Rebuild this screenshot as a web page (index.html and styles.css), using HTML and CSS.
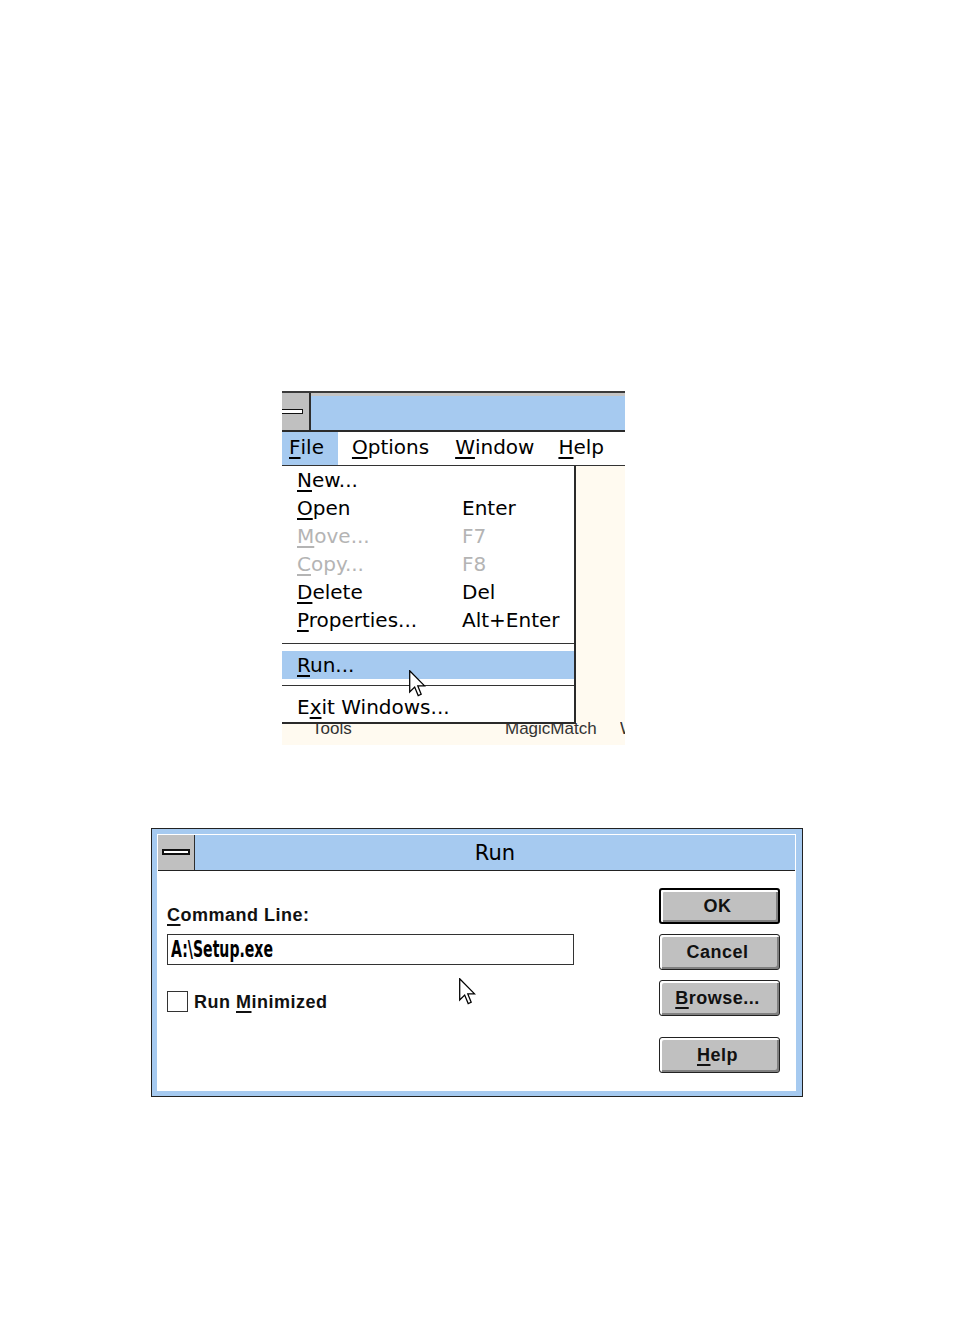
FILE: index.html
```html
<!DOCTYPE html>
<html>
<head>
<meta charset="utf-8">
<link rel="stylesheet" href="styles.css">
</head>
<body>
<div class="pm">
  <div class="pm-title">
    <div class="sysbox"><span class="minus"></span></div>
    <div class="pm-caption"></div>
  </div>
  <div class="menubar">
    <span class="mitem active"><u>F</u>ile</span>
    <span class="mitem"><u>O</u>ptions</span>
    <span class="mitem"><u>W</u>indow</span>
    <span class="mitem"><u>H</u>elp</span>
  </div>
  <div class="pm-content">
    <div class="group-row">
      <span class="gi gi-1">Tools</span>
      <span class="gi gi-2">MagicMatch</span>
      <span class="gi gi-3">W</span>
    </div>
    <div class="dropdown">
      <div class="row"><span><u>N</u>ew...</span><span></span></div>
      <div class="row"><span><u>O</u>pen</span><span>Enter</span></div>
      <div class="row disabled"><span><u>M</u>ove...</span><span>F7</span></div>
      <div class="row disabled"><span><u>C</u>opy...</span><span>F8</span></div>
      <div class="row"><span><u>D</u>elete</span><span>Del</span></div>
      <div class="row"><span><u>P</u>roperties...</span><span>Alt+Enter</span></div>
      <div class="sep sep-1"></div>
      <div class="row selected"><span><u>R</u>un...</span><span></span></div>
      <div class="sep sep-2"></div>
      <div class="row last"><span>E<u>x</u>it Windows...</span><span></span></div>
    </div>
    <svg class="cursor cursor-menu" width="17" height="27" viewBox="0 0 12 19"><path d="M0.5 0.5 L0.5 15.5 L4 12 L6.5 18 L8.6 17.1 L6.2 11.2 L11 11.2 Z" fill="#fff" stroke="#000" stroke-width="0.9" stroke-linejoin="miter"/></svg>
  </div>
</div>

<div class="dlg">
  <div class="dlg-inner">
    <div class="dlg-title">
      <div class="sysbox dsys"><span class="minus dminus"></span></div>
      <div class="dlg-caption">Run</div>
    </div>
    <div class="dlg-client">
      <div class="left-col">
        <div class="label"><u>C</u>ommand Line:</div>
        <div class="input"><span class="input-text">A:\Setup.exe</span></div>
        <div class="check-row">
          <span class="checkbox"></span>
          <span class="label">Run <u>M</u>inimized</span>
        </div>
      </div>
      <div class="right-col">
        <div class="btn default">OK</div>
        <div class="btn">Cancel</div>
        <div class="btn"><u>B</u>rowse...</div>
        <div class="btn help"><u>H</u>elp</div>
      </div>
      <svg class="cursor cursor-dlg" width="17" height="27" viewBox="0 0 12 19"><path d="M0.5 0.5 L0.5 15.5 L4 12 L6.5 18 L8.6 17.1 L6.2 11.2 L11 11.2 Z" fill="#fff" stroke="#000" stroke-width="0.9" stroke-linejoin="miter"/></svg>
    </div>
  </div>
</div>
</body>
</html>
```

FILE: styles.css
```css
html, body {
  margin: 0;
  padding: 0;
  background: #fff;
}
body {
  padding-top: 391px;
  font-family: "DejaVu Sans", sans-serif;
  color: #000;
}
u {
  text-decoration: underline;
  text-decoration-thickness: 2px;
  text-underline-offset: 3px;
}

/* ---------- Program manager crop ---------- */
.pm {
  width: 343px;
  margin-left: 282px;
  overflow: hidden;
}
.pm-title {
  display: flex;
  height: 37px;
  border-top: 2px solid #3a3a3a;
  border-bottom: 2px solid #2a2a2a;
  box-sizing: content-box;
}
.sysbox {
  width: 27px;
  background: #c0c0c0;
  border-right: 2px solid #2e2e2e;
  position: relative;
  flex: none;
}
.minus {
  position: absolute;
  left: -3px;
  top: 16px;
  width: 22px;
  height: 3px;
  background: #fff;
  border: 1.5px solid #111;
}
.pm-caption {
  flex: 1;
  background: #a6caf0;
  border-top: 3px solid #c4c4c4;
}
.menubar {
  display: flex;
  height: 33px;
  border-bottom: 1px solid #333;
  align-items: stretch;
  font-size: 20px;
}
.mitem {
  display: flex;
  align-items: center;
  padding: 0 11px 3px 14px;
  line-height: 1;
}
.mitem:nth-child(3) { padding-left: 15px; }
.mitem:nth-child(4) { padding-left: 13px; }
.mitem.active {
  background: #a6caf0;
  padding: 0 14px 3px 7px;
}
.pm-content {
  position: relative;
  height: 279px;
  background: #fffaf0;
  display: flex;
  flex-direction: column;
  justify-content: flex-end;
}
.group-row {
  display: flex;
  height: 20px;
  line-height: 20px;
  margin-bottom: 6px;
  padding-left: 30px;
  font-family: "Liberation Sans", Arial, sans-serif;
  font-size: 17px;
  color: #333;
  white-space: nowrap;
}
.gi { flex: none; }
.gi-1 { width: 193px; }
.gi-2 { width: 115px; }
.gi-3 { width: 5px; overflow: hidden; }

.dropdown {
  position: absolute;
  left: 0;
  top: 0;
  width: 292px;
  background: #fff;
  border-right: 2px solid #2a2a2a;
  border-bottom: 2px solid #2a2a2a;
  font-size: 20px;
}
.row {
  display: grid;
  grid-template-columns: 165px 1fr;
  height: 28px;
  align-items: center;
  padding-left: 15px;
  line-height: 1;
}
.row.last {
  height: 29px;
  padding-bottom: 1px;
}
.row.disabled { color: #b4b4b4; }
.row.selected { background: #a6caf0; }
.sep {
  height: 1px;
  background: #333;
}
.sep-1 { margin: 9px 0 7px; }
.sep-2 { margin: 6px 0 6px; }

.cursor {
  position: absolute;
  display: block;
}
.cursor-menu {
  left: 127px;
  top: 204px;
}

/* ---------- Run dialog ---------- */
.dlg {
  margin-top: 83px;
  margin-left: 151px;
  width: 652px;
  height: 269px;
  box-sizing: border-box;
  border: 1px solid #222;
  background: #a6caf0;
  padding: 5px 6px 5px 5px;
}
.dlg-inner {
  height: 100%;
  box-sizing: border-box;
  border: 1px solid #fff;
  display: flex;
  flex-direction: column;
}
.dlg-title {
  display: flex;
  height: 35px;
  border-bottom: 1px solid #222;
  background: #a6caf0;
  flex: none;
}
.dsys {
  width: 36px;
  border-right: 1px solid #2e2e2e;
}
.dminus {
  left: 4px;
  top: 14px;
  width: 24px;
  height: 2px;
  border: 2px solid #111;
}
.dlg-caption {
  flex: 1;
  text-align: center;
  font-size: 21px;
  line-height: 36px;
}
.dlg-client {
  position: relative;
  flex: 1;
  background: #fff;
  display: flex;
  justify-content: space-between;
  padding: 17px 15px 0 9px;
  font-family: "Liberation Sans", Arial, sans-serif;
  font-weight: bold;
  font-size: 18px;
  letter-spacing: 0.5px;
}
.left-col {
  width: 407px;
  display: flex;
  flex-direction: column;
}
.label {
  line-height: 20px;
  color: #111;
}
.left-col > .label { margin-top: 17px; }
.input {
  margin-top: 9px;
  height: 31px;
  box-sizing: border-box;
  border: 1px solid #333;
  display: flex;
  align-items: center;
  padding-left: 3px;
  overflow: hidden;
}
.input-text {
  display: inline-block;
  font-family: "DejaVu Sans Condensed", "DejaVu Sans", sans-serif;
  font-weight: bold;
  font-size: 23px;
  letter-spacing: 0px;
  line-height: 1;
  transform: scaleX(0.68);
  transform-origin: left center;
  white-space: nowrap;
}
.check-row {
  margin-top: 26px;
  display: flex;
  align-items: center;
  gap: 6px;
}
.check-row .label { padding-top: 1px; }
.checkbox {
  width: 21px;
  height: 21px;
  box-sizing: border-box;
  border: 1px solid #333;
  background: #fff;
  flex: none;
}
.right-col {
  display: flex;
  flex-direction: column;
  gap: 10px;
}
.btn {
  width: 121px;
  height: 36px;
  box-sizing: border-box;
  border: 1px solid #222;
  border-radius: 3px;
  background: #c0c0c0;
  box-shadow: inset 2px 2px 0 #fff, inset -2px -2px 0 #808080;
  display: flex;
  align-items: center;
  justify-content: center;
  color: #111;
  line-height: 1;
  padding-right: 4px;
}
.btn.default {
  border: 2px solid #000;
}
.btn.help {
  margin-top: 11px;
}
.cursor-dlg {
  left: 301px;
  top: 107px;
}
```
